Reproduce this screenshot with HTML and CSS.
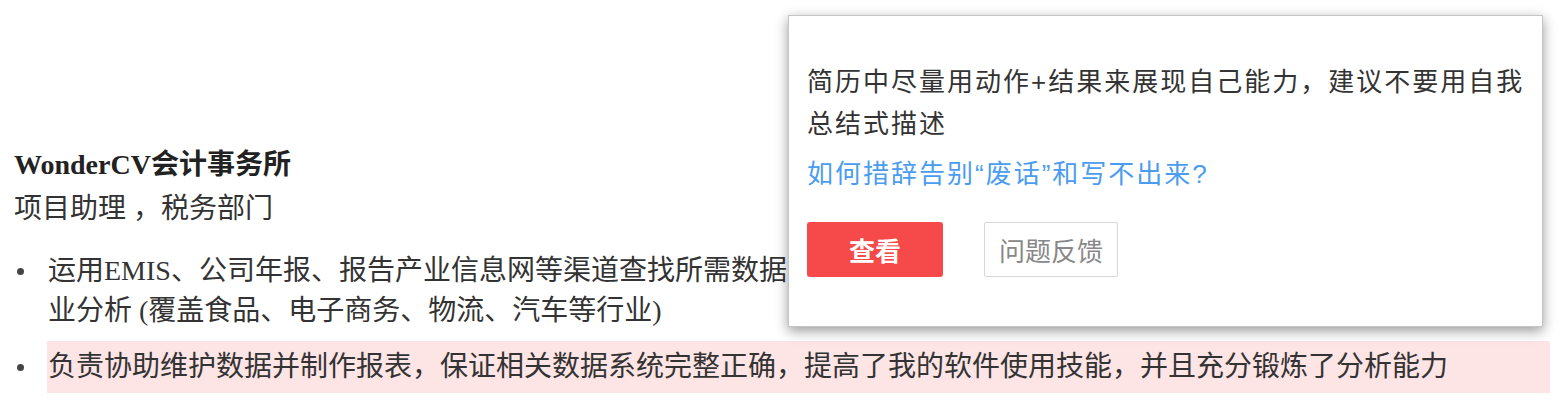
FILE: index.html
```html
<!DOCTYPE html>
<html lang="zh-CN">
<head>
<meta charset="utf-8">
<title>WonderCV</title>
<link rel="stylesheet" href="styles.css">
</head>
<body>
<div class="page">
  <section class="entry">
    <h3 class="company">WonderCV会计事务所</h3>
    <p class="role">项目助理 ，税务部门</p>
    <ul class="items">
      <li class="item"><span class="dot" aria-hidden="true"></span><span class="text">运用EMIS、公司年报、报告产业信息网等渠道查找所需数据，<br>业分析 (覆盖食品、电子商务、物流、汽车等行业)</span></li>
      <li class="item item-hl"><span class="dot" aria-hidden="true"></span><span class="text">负责协助维护数据并制作报表，保证相关数据系统完整正确，提高了我的软件使用技能，并且充分锻炼了分析能力</span></li>
    </ul>
  </section>

  <div class="tip">
    <p class="tip-msg">简历中尽量用动作+结果来展现自己能力，建议不要用自我总结式描述</p>
    <a class="tip-link" href="#">如何措辞告别“废话”和写不出来?</a>
    <div class="tip-actions">
      <button class="btn btn-primary">查看</button>
      <button class="btn btn-ghost">问题反馈</button>
    </div>
  </div>
</div>
</body>
</html>
```

FILE: styles.css
```css
* { box-sizing: border-box; }
html, body { margin: 0; padding: 0; background: #fff; }
body {
  width: 1564px;
  height: 418px;
  overflow: hidden;
  font-family: "Liberation Serif", "Noto Sans CJK SC", serif;
  color: #333;
}
.page { position: relative; width: 100%; height: 100%; }

.entry { padding: 143px 14px 0 14px; }
.company {
  margin: 0;
  font-size: 28px;
  line-height: 44px;
  font-weight: bold;
  color: #222;
}
.role {
  margin: 0;
  font-size: 28px;
  line-height: 44px;
  color: #333;
}
.items { list-style: none; margin: 20px 0 0 0; padding: 0; }
.item {
  display: flex;
  font-size: 28px;
  line-height: 40px;
}
.dot {
  flex: 0 0 33px;
  height: 40px;
  display: flex;
  align-items: center;
  padding-left: 3px;
}
.dot::before {
  content: "";
  width: 7px;
  height: 7px;
  border-radius: 50%;
  background: #444;
}
.text { flex: 1; padding-left: 1px; }
.item-hl { margin-top: 10px; }
.item-hl .text { background: #fde4e5; padding-top: 6px; padding-bottom: 6px; }
.item-hl .dot { height: 52px; }

.tip {
  position: absolute;
  left: 788px;
  top: 15px;
  width: 755px;
  height: 312px;
  background: #fff;
  border: 1px solid #c4c4c4;
  box-shadow: 0 4px 12px rgba(0, 0, 0, 0.4);
  padding: 45px 8px 0 18px;
  font-family: "Liberation Sans", "Noto Sans CJK SC", sans-serif;
}
.tip-msg {
  margin: 0;
  font-size: 26px;
  letter-spacing: 2px;
  line-height: 42px;
  color: #333;
}
.tip-link {
  display: block;
  margin-top: 8px;
  font-size: 26px;
  letter-spacing: 2px;
  line-height: 42px;
  color: #4a9cf0;
  text-decoration: none;
}
.tip-actions { display: flex; gap: 41px; margin-top: 27px; }
.btn {
  font-family: "Noto Sans CJK SC", sans-serif;
  font-size: 26px;
  height: 55px;
  border-radius: 3px;
  padding: 0;
}
.btn-primary {
  width: 136px;
  background: #f64a4a;
  border: none;
  color: #fff;
  font-weight: bold;
}
.btn-ghost {
  width: 134px;
  background: #fff;
  border: 1px solid #d6d6d6;
  color: #888;
  border-radius: 2px;
}
```
